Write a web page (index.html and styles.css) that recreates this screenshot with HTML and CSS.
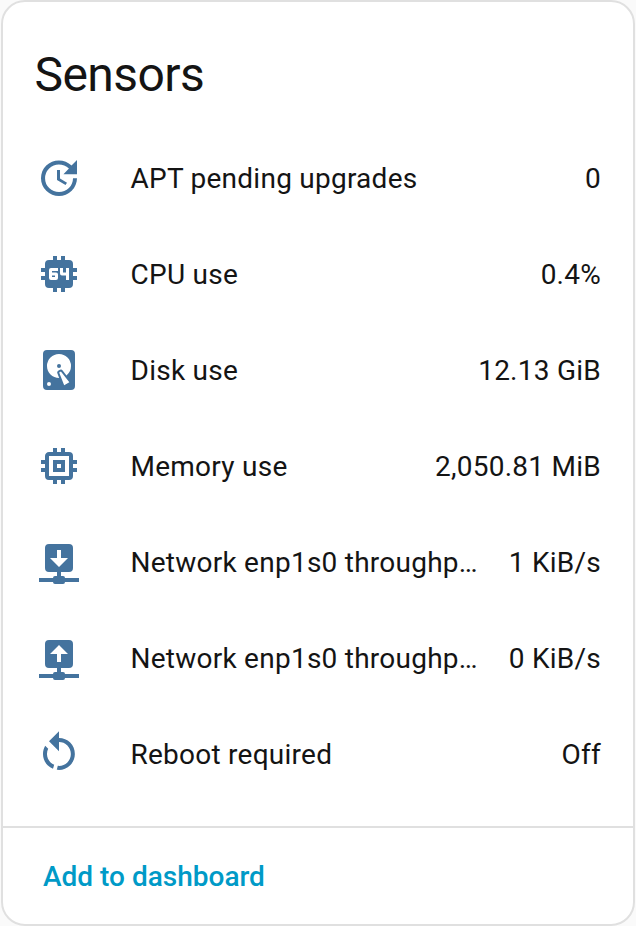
FILE: index.html
```html
<!DOCTYPE html>
<html lang="en">
<head>
<meta charset="utf-8">
<title>Sensors</title>
<link rel="stylesheet" href="styles.css">
</head>
<body>
<main class="card">
  <h1 class="title">Sensors</h1>
  <div class="rows">
    <div class="row">
      <svg class="icon" viewBox="0 0 24 24"><path d="M21 10.12h-6.78l2.74-2.82c-2.73-2.7-7.15-2.8-9.88-.1a6.875 6.875 0 0 0 0 9.79c2.73 2.7 7.15 2.7 9.88 0C18.32 15.65 19 14.08 19 12.1h2c0 1.98-.88 4.55-2.64 6.29-3.51 3.48-9.21 3.48-12.72 0-3.5-3.47-3.53-9.11-.02-12.58a8.987 8.987 0 0 1 12.65 0L21 3v7.12M12.5 8v4.25l3.5 2.08-.72 1.21L11 13V8h1.5Z"/></svg>
      <span class="name">APT pending upgrades</span><span class="value">0</span>
    </div>
    <div class="row">
      <svg class="icon" viewBox="0 0 24 24"><path d="M9 3V5H7A2 2 0 0 0 5 7V9H3V11H5V13H3V15H5V17A2 2 0 0 0 7 19H9V21H11V19H13V21H15V19H17A2 2 0 0 0 19 17V15H21V13H19V11H21V9H19V7A2 2 0 0 0 17 5H15V3H13V5H11V3M8 9H11.5V10.5H8.5V11.25H10.5A1 1 0 0 1 11.5 12.25V14A1 1 0 0 1 10.5 15H8A1 1 0 0 1 7 14V10A1 1 0 0 1 8 9M12.5 9H14V11.25H15.5V9H17V15H15.5V12.75H13.5A1 1 0 0 1 12.5 11.75M8.5 12.75V13.5H10V12.75"/></svg>
      <span class="name">CPU use</span><span class="value">0.4%</span>
    </div>
    <div class="row">
      <svg class="icon" viewBox="0 0 24 24"><path d="M6 2h12a2 2 0 0 1 2 2v16a2 2 0 0 1-2 2H6a2 2 0 0 1-2-2V4a2 2 0 0 1 2-2m6 2a6 6 0 0 0-6 6c0 3.31 2.69 6 6.1 6l-.88-2.23a1.01 1.01 0 0 1 .37-1.37l.86-.5a1.01 1.01 0 0 1 1.37.37l1.92 2.42A5.977 5.977 0 0 0 18 10a6 6 0 0 0-6-6m0 5a1 1 0 0 1 1 1 1 1 0 0 1-1 1 1 1 0 0 1-1-1 1 1 0 0 1 1-1m-5 9a1 1 0 0 0-1 1 1 1 0 0 0 1 1 1 1 0 0 0 1-1 1 1 0 0 0-1-1m5.09-4.73 2.49 6.31 2.59-1.5-4.22-5.31-.86.5Z"/></svg>
      <span class="name">Disk use</span><span class="value">12.13 GiB</span>
    </div>
    <div class="row">
      <svg class="icon" viewBox="0 0 24 24"><path d="M17 17H7V7h10m4 4V9h-2V7a2 2 0 0 0-2-2h-2V3h-2v2h-2V3H9v2H7c-1.11 0-2 .89-2 2v2H3v2h2v2H3v2h2v2a2 2 0 0 0 2 2h2v2h2v-2h2v2h2v-2h2a2 2 0 0 0 2-2v-2h2v-2h-2v-2m-6 2h-2v-2h2m2-2H9v6h6V9Z"/></svg>
      <span class="name">Memory use</span><span class="value">2,050.81 MiB</span>
    </div>
    <div class="row">
      <svg class="icon" viewBox="0 0 24 24"><path d="M17 3a2 2 0 0 1 2 2v10a2 2 0 0 1-2 2h-4v2h1a1 1 0 0 1 1 1h7v2h-7a1 1 0 0 1-1 1h-4a1 1 0 0 1-1-1H2v-2h7a1 1 0 0 1 1-1h1v-2H7a2 2 0 0 1-2-2V5a2 2 0 0 1 2-2h10m-5 11.5 4.5-4.5H13V6h-2v4H7.5l4.5 4.5Z"/></svg>
      <span class="name">Network enp1s0 throughp…</span><span class="value">1 KiB/s</span>
    </div>
    <div class="row">
      <svg class="icon" viewBox="0 0 24 24"><path d="M17 3a2 2 0 0 1 2 2v10a2 2 0 0 1-2 2h-4v2h1a1 1 0 0 1 1 1h7v2h-7a1 1 0 0 1-1 1h-4a1 1 0 0 1-1-1H2v-2h7a1 1 0 0 1 1-1h1v-2H7a2 2 0 0 1-2-2V5a2 2 0 0 1 2-2h10m-5 2.5L7.5 10H11v4h2v-4h3.500L12 5.500Z"/></svg>
      <span class="name">Network enp1s0 throughp…</span><span class="value">0 KiB/s</span>
    </div>
    <div class="row">
      <svg class="icon" viewBox="0 0 24 24"><path d="M12 4c2.1 0 4.1.8 5.6 2.3 3.1 3.1 3.1 8.2 0 11.3-1.8 1.9-4.3 2.6-6.7 2.3l.5-2c1.7.2 3.5-.4 4.800-1.7 2.3-2.3 2.3-6.1 0-8.500C15.1 6.6 13.5 6 12 6v4.6l-5-5 5-5V4M6.300 17.600C3.700 15 3.300 11 5.100 7.900l1.500 1.500c-1.100 2.200-.7 5 1.200 6.800.5.5 1.100.9 1.800 1.200l-.6 2c-1-.4-1.900-1-2.700-1.800Z"/></svg>
      <span class="name">Reboot required</span><span class="value">Off</span>
    </div>
  </div>
  <footer class="actions"><button class="add">Add to dashboard</button></footer>
</main>
</body>
</html>
```
FILE: styles.css
```css
* { box-sizing: border-box; }
body { margin: 0; background: #fafafa; color: #141414; font-family: Roboto, sans-serif; }
.card {
  display: flex;
  flex-direction: column;
  width: 634px;
  height: 926px;
  margin-left: 1px;
  background: #fff;
  border: 2px solid #e0e0e0;
  border-radius: 24px;
}
.title { margin: 0; height: 128px; padding: 25px 31.500px 0; font-size: 48px; line-height: 96px; font-weight: 400; letter-spacing: -0.576px; }
.rows { display: flex; flex-direction: column; gap: 16px; padding: 8px 32px 0; }
.row { display: flex; align-items: center; height: 80px; font-size: 28px; line-height: 40px; letter-spacing: 0.25px; }
.icon { flex: none; width: 48px; height: 48px; margin-right: 47.500px; fill: #44739e; }
.name { flex: 1; min-width: 0; padding-top: 2px; white-space: nowrap; }
.value { flex: none; padding-top: 2px; white-space: nowrap; }
.actions { margin-top: auto; height: 98px; padding: 13px 16px 11px; border-top: 2px solid #e0e0e0; }
.add { height: 72px; padding: 0 24px; border: 0; background: none; color: #009ac7; font: 500 28px/40px Roboto, sans-serif; }
```
